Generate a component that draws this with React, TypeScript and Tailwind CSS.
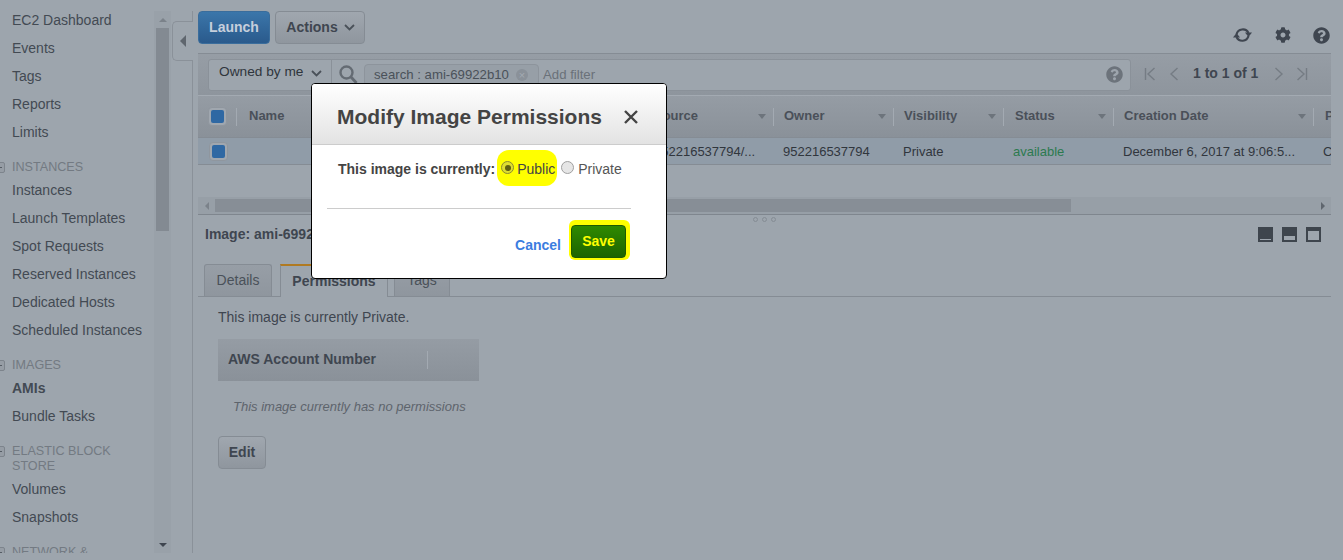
import React from "react";
import { FaCog, FaQuestionCircle } from "react-icons/fa";

const Caret = () => (
  <span className="inline-block w-0 h-0 border-x-[4px] border-x-transparent border-t-[5px] border-t-[#6d747c]" />
);

const NavItem = ({ label, bold }: { label: string; bold?: boolean }) => (
  <div className={`h-7 leading-7 pl-3 text-[14px] whitespace-nowrap text-[#434a53] ${bold ? "font-bold" : ""}`}>{label}</div>
);

const NavHead = ({ lines }: { lines: string[] }) => (
  <div className="relative pt-[14px] pb-[1px] pl-3 text-[12.6px] leading-[15px] text-[#737a82]">
    <span className="absolute left-[-6px] top-[16px] w-[11px] h-[11px] rounded-[2px] border border-[#7d848c] bg-[#969da5] flex items-center justify-center">
      <span className="w-[5px] h-px bg-[#555c64]" />
    </span>
    {lines.map((l) => (
      <div key={l}>{l}</div>
    ))}
  </div>
);

const Check = () => (
  <span className="w-[19px] h-[19px] rounded-[4px] border border-[#8f969e] bg-[#a0a7af] flex items-center justify-center">
    <span className="w-[13px] h-[13px] rounded-[2px] bg-[#2f68a3]" />
  </span>
);

const columns = [
  { label: "Source", w: "w-[134px]", h: "pl-[14px]", r: "pl-[14px]", text: "952216537794/...", c: "text-[#30363d]" },
  { label: "Owner", w: "w-[120px]", h: "pl-[10px]", r: "pl-[9px]", text: "952216537794", c: "text-[#30363d]" },
  { label: "Visibility", w: "w-[110px]", h: "pl-[10px]", r: "pl-[9px]", text: "Private", c: "text-[#30363d]" },
  { label: "Status", w: "w-[110px]", h: "pl-[11px]", r: "pl-[9px]", text: "available", c: "text-[#2c7a4f]" },
  { label: "Creation Date", w: "w-[200px]", h: "pl-[10px]", r: "pl-[9px]", text: "December 6, 2017 at 9:06:5...", c: "text-[#30363d]" },
];

const PagerIcon = ({ d }: { d: string }) => (
  <svg width="12" height="16" viewBox="0 0 12 16" fill="none" stroke="#757c84" strokeWidth="1.4">
    <path d={d} />
  </svg>
);

const PaneIcon = ({ top, bottom }: { top: number; bottom: number }) => (
  <svg width="15" height="15" viewBox="0 0 15 15">
    <rect width="15" height="15" fill="#3e454d" />
    <rect x="2" y={top} width="11" height={bottom} fill="#9da5ad" />
  </svg>
);

export default function App() {
  return (
    <div className="relative w-[1343px] h-[560px] overflow-hidden flex bg-[#9da5ad] font-['Liberation_Sans',Arial,sans-serif] text-[14px] text-[#3f4650]">
      {/* Sidebar */}
      <nav className="w-[154px] h-[553px] overflow-hidden pt-[6px] shrink-0">
        <NavItem label="EC2 Dashboard" />
        <NavItem label="Events" />
        <NavItem label="Tags" />
        <NavItem label="Reports" />
        <NavItem label="Limits" />
        <NavHead lines={["INSTANCES"]} />
        <NavItem label="Instances" />
        <NavItem label="Launch Templates" />
        <NavItem label="Spot Requests" />
        <NavItem label="Reserved Instances" />
        <NavItem label="Dedicated Hosts" />
        <NavItem label="Scheduled Instances" />
        <NavHead lines={["IMAGES"]} />
        <NavItem label="AMIs" bold />
        <NavItem label="Bundle Tasks" />
        <NavHead lines={["ELASTIC BLOCK", "STORE"]} />
        <NavItem label="Volumes" />
        <NavItem label="Snapshots" />
        <NavHead lines={["NETWORK &"]} />
      </nav>

      {/* Sidebar scrollbar */}
      <div className="w-[17px] h-[542px] mt-[11px] shrink-0 bg-[#99a1a9] flex flex-col items-center">
        <div className="h-[17px] flex items-center justify-center">
          <span className="w-0 h-0 border-x-[4px] border-x-transparent border-b-[4px] border-b-[#7b828a]" />
        </div>
        <div className="w-[13px] h-[203px] bg-[#838a92]" />
        <div className="mt-auto h-[17px] flex items-center justify-center">
          <span className="w-0 h-0 border-x-[4px] border-x-transparent border-t-[4px] border-t-[#3f4650]" />
        </div>
      </div>

      {/* Collapse rail */}
      <div className="w-[22px] h-[542px] mt-[11px] shrink-0 border-r border-[#8a9199] pt-[10px] pl-px">
        <div className="h-[40px] w-[21px] -mr-px rounded-l-[5px] border border-r-0 border-[#8a9199] bg-[#9da5ad] flex items-center justify-center">
          <span className="w-0 h-0 border-y-[6px] border-y-transparent border-r-[6px] border-r-[#5f666e]" />
        </div>
      </div>

      {/* Main */}
      <main className="ml-[5px] w-[1133px] shrink-0 pt-[11px]">
        <div className="h-[33px] flex gap-[5px]">
          <button className="w-[72px] h-[33px] rounded-[4px] border border-[#3a6d9c] bg-gradient-to-b from-[#3b76aa] to-[#2a5a8c] text-[#c6cfdc] font-bold text-[14px]">
            Launch
          </button>
          <button className="w-[90px] h-[33px] rounded-[4px] border border-[#858c94] bg-gradient-to-b from-[#a0a7af] to-[#8f969e] font-bold text-[14px] text-[#3f4650] flex items-center justify-center gap-[6px] pl-px">
            Actions
            <svg width="11" height="7" viewBox="0 0 11 7" fill="none" stroke="#4a5159" strokeWidth="1.8">
              <path d="M1 1l4.5 4.5L10 1" />
            </svg>
          </button>
          <div className="ml-auto mr-[1px] mt-[14px] h-[20px] flex items-center gap-[22px] text-[#3f4650]">
            <svg width="21" height="20" viewBox="0 0 21 20" fill="none" stroke="#3f4650" strokeWidth="2.1">
              <path d="M4.5 9.5A6.4 6.4 0 0 1 16.5 8" />
              <path d="M16.5 11A6.4 6.4 0 0 1 4.5 12" />
              <path d="M13 7.5h7l-3.5 4.5z" fill="#3f4650" stroke="none" />
              <path d="M1 12.5h7l-3.5 -4.5z" fill="#3f4650" stroke="none" />
            </svg>
            <FaCog size={16} />
            <FaQuestionCircle size={17} />
          </div>
        </div>

        {/* Filter bar */}
        <div className="mt-[9px] h-[42px] border-t border-[#858c94] bg-gradient-to-b from-[#969da5] to-[#8e959d] flex items-center pl-[10px]">
          <div className="w-[923px] h-[32px] rounded-[3px] border border-[#8a9199] bg-[#9da5ad] flex items-center">
            <div className="w-[123px] h-full border-r border-[#8a9199] flex items-center pl-[10px] pb-[4px] text-[#2f353c] text-[13.7px] whitespace-nowrap">
              Owned by me
              <svg className="ml-[8px] mt-[2px]" width="11" height="7" viewBox="0 0 11 7" fill="none" stroke="#4a5159" strokeWidth="1.8">
                <path d="M1 1l4.5 4.5L10 1" />
              </svg>
            </div>
            <svg className="ml-[7px]" width="19" height="20" viewBox="0 0 19 20" fill="none" stroke="#646b73" strokeWidth="2.4">
              <circle cx="7.5" cy="7.5" r="6" />
              <path d="M12 12l5.5 6" strokeWidth="2.8" />
            </svg>
            <div className="ml-[6px] w-[175px] h-[22px] rounded-[4px] border border-[#8d949c] bg-[#979fa7] flex items-center pl-[9px] text-[13.2px] text-[#4a5159] whitespace-nowrap">
              search : ami-69922b10
              <span className="ml-[7px] w-[12px] h-[12px] rounded-full bg-[#8a9199] text-[#a3aab2] text-[11px] leading-[12px] text-center">×</span>
            </div>
            <span className="ml-[4px] text-[13.2px] text-[#6a7179]">Add filter</span>
            <span className="ml-auto mr-[7px] text-[#6c737b]">
              <FaQuestionCircle size={17} />
            </span>
          </div>
          <div className="ml-[13px] pb-[2px] flex items-center">
            <PagerIcon d="M1.5 2v12M10.5 2L4 8l6.5 6" />
            <span className="ml-[12px]">
              <PagerIcon d="M9.5 2L3 8l6.5 6" />
            </span>
            <span className="ml-[13px] font-bold text-[14px] text-[#3f4650] whitespace-nowrap">1 to 1 of 1</span>
            <span className="ml-[15px]">
              <PagerIcon d="M2.5 2L9 8l-6.5 6" />
            </span>
            <span className="ml-[11px]">
              <PagerIcon d="M1.5 2L8 8l-6.5 6M10.5 2v12" />
            </span>
          </div>
        </div>

        {/* Table header */}
        <div className="h-[42px] border-t border-[#a3aab2] bg-gradient-to-b from-[#959ca4] to-[#8a9199] flex items-center text-[13px] font-bold text-[#4a5059] whitespace-nowrap overflow-hidden">
          <div className="w-[40px] shrink-0 pl-[10px] flex items-center justify-between">
            <Check />
            <span className="w-px h-[18px] bg-[#a3aab2] mr-[1px]" />
          </div>
          <div className="w-[402px] shrink-0 pl-[11px] pb-[2px]">Name</div>
          {columns.map((c) => (
            <div key={c.label} className={`${c.w} shrink-0 ${c.h} flex items-center`}>
              <span className="pb-[2px]">{c.label}</span>
              <span className="ml-auto mr-[7px] flex">
                <Caret />
              </span>
              <span className="w-px h-[18px] bg-[#a3aab2]" />
            </div>
          ))}
          <div className="pl-[11px] pb-[2px]">P</div>
        </div>

        {/* Row */}
        <div className="h-[28px] border-y border-[#858c94] bg-[#909ca8] flex items-center text-[13px] whitespace-nowrap overflow-hidden">
          <div className="w-[40px] shrink-0 pl-[11px] pt-[1px] flex items-center">
            <Check />
          </div>
          <div className="w-[402px] shrink-0" />
          {columns.map((c) => (
            <div key={c.label} className={`${c.w} shrink-0 ${c.r} ${c.c} pt-[2px]`}>
              {c.text}
            </div>
          ))}
          <div className="pl-[9px] pt-[2px] text-[#30363d]">C</div>
        </div>

        <div className="h-[32px]" />

        {/* Horizontal scrollbar */}
        <div className="h-[18px] border-b border-[#7f868e] bg-[#979fa7] flex items-center">
          <div className="w-[17px] flex justify-center">
            <span className="w-0 h-0 border-y-[4px] border-y-transparent border-r-[4px] border-r-[#7b828a]" />
          </div>
          <div className="w-[856px] h-[13px] bg-[#878e96]" />
          <div className="ml-auto w-[17px] flex justify-center">
            <span className="w-0 h-0 border-y-[4px] border-y-transparent border-l-[4px] border-l-[#5f666e]" />
          </div>
        </div>

        {/* Details pane */}
        <div className="h-[9px] pt-[2px] flex justify-center gap-[4px]">
          {[0, 1, 2].map((i) => (
            <span key={i} className="w-[5px] h-[5px] rounded-full border border-[#858c94]" />
          ))}
        </div>
        <div className="h-[20px] flex items-center pl-[7px] pr-[10px]">
          <span className="font-bold text-[#3f4650]">Image: ami-69922b10</span>
          <div className="ml-auto flex gap-[9px]">
            <PaneIcon top={12} bottom={1} />
            <PaneIcon top={9} bottom={4} />
            <PaneIcon top={4} bottom={9} />
          </div>
        </div>

        <div className="mt-[20px] h-[33px] border-b border-[#858c94] pl-[6px] flex items-end">
          <div className="w-[68px] h-[32px] border border-b-0 border-[#858c94] rounded-t-[3px] bg-gradient-to-b from-[#979ea6] to-[#8f969e] text-center leading-[31px] text-[#4a5159]">
            Details
          </div>
          <div className="ml-[8px] w-[108px] h-[33px] -mb-px border-x border-[#858c94] border-t-2 border-t-[#b07a22] bg-[#9da5ad] text-center leading-[30px] font-bold text-[#3f4650]">
            Permissions
          </div>
          <div className="ml-[6px] w-[56px] h-[32px] border border-b-0 border-[#858c94] rounded-t-[3px] bg-gradient-to-b from-[#979ea6] to-[#8f969e] text-center leading-[31px] text-[#4a5159]">
            Tags
          </div>
        </div>

        <div className="pl-[20px]">
          <p className="mt-[10px] h-[20px] leading-[20px] text-[#3f4650]">This image is currently Private.</p>
          <div className="mt-[12px] w-[261px] h-[42px] bg-gradient-to-b from-[#959ca4] to-[#8a9199] flex items-center pl-[10px] font-bold text-[#3f4650]">
            <span className="w-[199px] pb-[2px]">AWS Account Number</span>
            <span className="w-px h-[18px] bg-[#a3aab2]" />
          </div>
          <p className="mt-[16px] h-[20px] leading-[20px] pl-[15px] italic text-[13px] text-[#5d646c]">
            This image currently has no permissions
          </p>
          <button className="mt-[19px] w-[48px] h-[33px] rounded-[4px] border border-[#858c94] bg-gradient-to-b from-[#a0a7af] to-[#8f969e] font-bold text-[#3f4650]">
            Edit
          </button>
        </div>
      </main>

      {/* Modal */}
      <div className="absolute left-[311px] top-[83px] w-[356px] h-[196px] bg-white border border-black rounded-[4px] overflow-hidden">
        <div className="h-[61px] border-b border-[#cccccc] bg-gradient-to-b from-white to-[#e3e3e3] flex items-center pl-[25px] pr-[28px] pt-[6px]">
          <h2 className="font-bold text-[21px] text-[#444444] whitespace-nowrap">Modify Image Permissions</h2>
          <svg className="ml-auto" width="14" height="14" viewBox="0 0 14 14" stroke="#444444" strokeWidth="2.4">
            <path d="M1 1l12 12M13 1L1 13" />
          </svg>
        </div>
        <div className="pl-[26px] pt-[14px] h-[63px] flex items-start">
          <span className="font-bold text-[14px] text-[#444444] whitespace-nowrap leading-[20px]">This image is currently:</span>
          <div className="relative ml-[6px] flex items-start h-[20px] w-[60px]">
            <span className="absolute left-[-4px] top-[-9px] w-[60px] h-[36px] rounded-[12px] bg-[#ffff00]" />
            <span className="relative mt-[2px] w-[13px] h-[13px] rounded-full border border-[#8a8a30] bg-[#dede30] flex items-center justify-center">
              <span className="w-[6px] h-[6px] rounded-full bg-[#5f5f10]" />
            </span>
            <span className="relative ml-[3px] text-[#444444] leading-[20px]">Public</span>
          </div>
          <span className="mt-[2px] w-[13px] h-[13px] rounded-full border border-[#a0a0a0] bg-[#e6e6e6]" />
          <span className="ml-[4px] text-[#555555] leading-[20px]">Private</span>
        </div>
        <div className="mx-[15px] h-px bg-[#cccccc] w-[304px]" />
        <div className="flex justify-end items-start pr-[40px] pt-[16px]">
          <a className="mt-[10px] font-bold text-[14px] text-[#3b7de0]">Cancel</a>
          <div className="relative ml-[10px] w-[55px] h-[33px]">
            <span className="absolute left-[-2px] top-[-5px] w-[61px] h-[40px] rounded-[6px] bg-[#ffff00]" />
            <button className="relative w-[55px] h-[33px] rounded-[4px] border border-[#1f5a00] bg-gradient-to-b from-[#2f8a00] to-[#1d6400] font-bold text-[14px] text-[#ffff00]">
              Save
            </button>
          </div>
        </div>
      </div>
    </div>
  );
}
